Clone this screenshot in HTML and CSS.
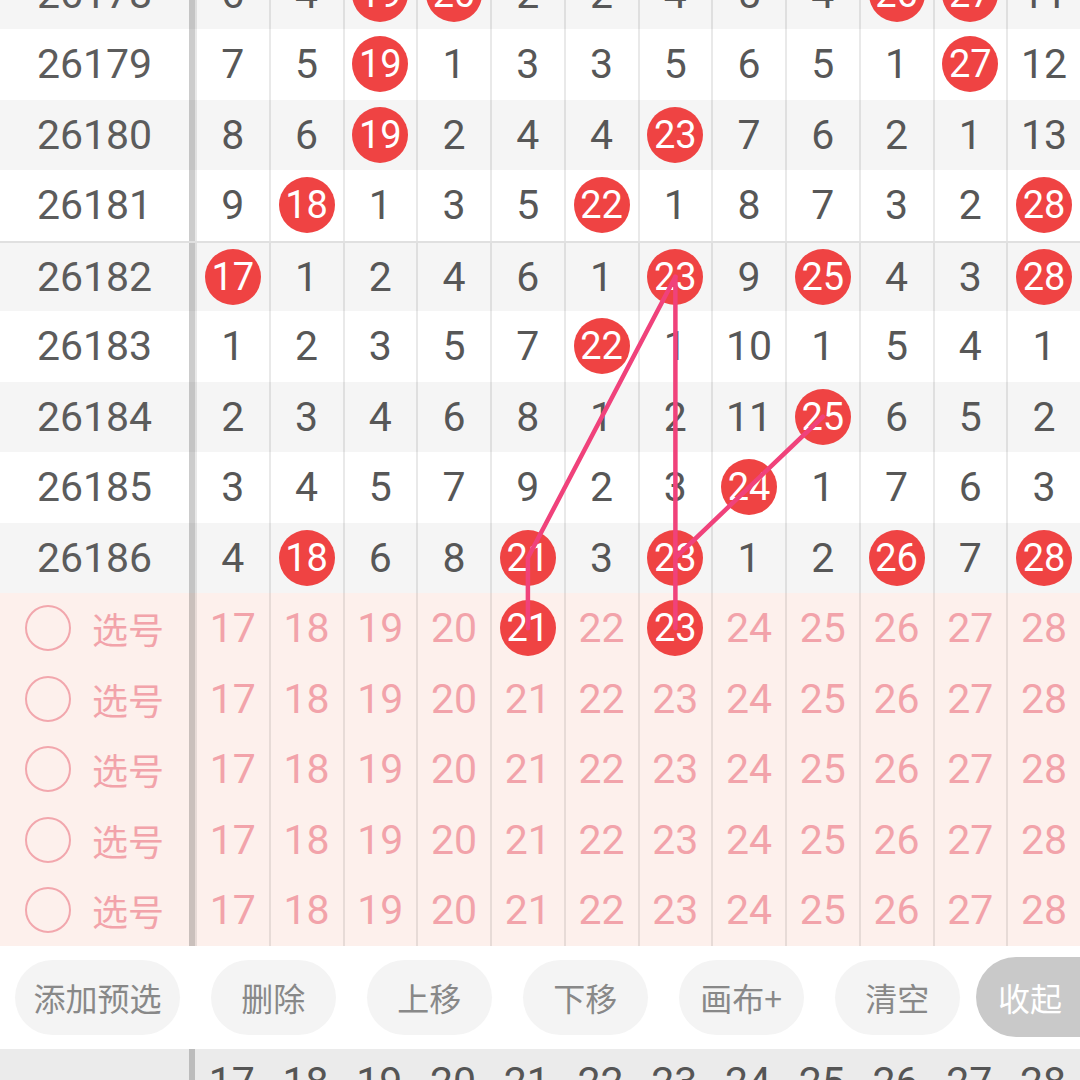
FILE: index.html
```html
<!DOCTYPE html>
<html lang="zh-CN">
<head>
<meta charset="utf-8">
<title>走势图</title>
<link rel="stylesheet" href="styles.css">
</head>
<body>
<div class="board">
  <div class="row alt">
    <div class="issue">26178</div>
    <div class="c">6</div><div class="c">4</div><div class="c"><span class="ball">19</span></div><div class="c"><span class="ball">20</span></div><div class="c">2</div><div class="c">2</div><div class="c">4</div><div class="c">5</div><div class="c">4</div><div class="c"><span class="ball">26</span></div><div class="c"><span class="ball">27</span></div><div class="c">11</div>
  </div>
  <div class="row">
    <div class="issue">26179</div>
    <div class="c">7</div><div class="c">5</div><div class="c"><span class="ball">19</span></div><div class="c">1</div><div class="c">3</div><div class="c">3</div><div class="c">5</div><div class="c">6</div><div class="c">5</div><div class="c">1</div><div class="c"><span class="ball">27</span></div><div class="c">12</div>
  </div>
  <div class="row alt">
    <div class="issue">26180</div>
    <div class="c">8</div><div class="c">6</div><div class="c"><span class="ball">19</span></div><div class="c">2</div><div class="c">4</div><div class="c">4</div><div class="c"><span class="ball">23</span></div><div class="c">7</div><div class="c">6</div><div class="c">2</div><div class="c">1</div><div class="c">13</div>
  </div>
  <div class="row">
    <div class="issue">26181</div>
    <div class="c">9</div><div class="c"><span class="ball">18</span></div><div class="c">1</div><div class="c">3</div><div class="c">5</div><div class="c"><span class="ball">22</span></div><div class="c">1</div><div class="c">8</div><div class="c">7</div><div class="c">3</div><div class="c">2</div><div class="c"><span class="ball">28</span></div>
  </div>
  <div class="row alt sep">
    <div class="issue">26182</div>
    <div class="c"><span class="ball">17</span></div><div class="c">1</div><div class="c">2</div><div class="c">4</div><div class="c">6</div><div class="c">1</div><div class="c"><span class="ball">23</span></div><div class="c">9</div><div class="c"><span class="ball">25</span></div><div class="c">4</div><div class="c">3</div><div class="c"><span class="ball">28</span></div>
  </div>
  <div class="row">
    <div class="issue">26183</div>
    <div class="c">1</div><div class="c">2</div><div class="c">3</div><div class="c">5</div><div class="c">7</div><div class="c"><span class="ball">22</span></div><div class="c">1</div><div class="c">10</div><div class="c">1</div><div class="c">5</div><div class="c">4</div><div class="c">1</div>
  </div>
  <div class="row alt">
    <div class="issue">26184</div>
    <div class="c">2</div><div class="c">3</div><div class="c">4</div><div class="c">6</div><div class="c">8</div><div class="c">1</div><div class="c">2</div><div class="c">11</div><div class="c"><span class="ball">25</span></div><div class="c">6</div><div class="c">5</div><div class="c">2</div>
  </div>
  <div class="row">
    <div class="issue">26185</div>
    <div class="c">3</div><div class="c">4</div><div class="c">5</div><div class="c">7</div><div class="c">9</div><div class="c">2</div><div class="c">3</div><div class="c"><span class="ball">24</span></div><div class="c">1</div><div class="c">7</div><div class="c">6</div><div class="c">3</div>
  </div>
  <div class="row alt">
    <div class="issue">26186</div>
    <div class="c">4</div><div class="c"><span class="ball">18</span></div><div class="c">6</div><div class="c">8</div><div class="c"><span class="ball">21</span></div><div class="c">3</div><div class="c"><span class="ball">23</span></div><div class="c">1</div><div class="c">2</div><div class="c"><span class="ball">26</span></div><div class="c">7</div><div class="c"><span class="ball">28</span></div>
  </div>

  <div class="row pick">
    <div class="issue"><span class="radio"></span><span class="pick-label">选号</span></div>
    <div class="c">17</div><div class="c">18</div><div class="c">19</div><div class="c">20</div><div class="c"><span class="ball">21</span></div><div class="c">22</div><div class="c"><span class="ball">23</span></div><div class="c">24</div><div class="c">25</div><div class="c">26</div><div class="c">27</div><div class="c">28</div>
  </div>
  <div class="row pick">
    <div class="issue"><span class="radio"></span><span class="pick-label">选号</span></div>
    <div class="c">17</div><div class="c">18</div><div class="c">19</div><div class="c">20</div><div class="c">21</div><div class="c">22</div><div class="c">23</div><div class="c">24</div><div class="c">25</div><div class="c">26</div><div class="c">27</div><div class="c">28</div>
  </div>
  <div class="row pick">
    <div class="issue"><span class="radio"></span><span class="pick-label">选号</span></div>
    <div class="c">17</div><div class="c">18</div><div class="c">19</div><div class="c">20</div><div class="c">21</div><div class="c">22</div><div class="c">23</div><div class="c">24</div><div class="c">25</div><div class="c">26</div><div class="c">27</div><div class="c">28</div>
  </div>
  <div class="row pick">
    <div class="issue"><span class="radio"></span><span class="pick-label">选号</span></div>
    <div class="c">17</div><div class="c">18</div><div class="c">19</div><div class="c">20</div><div class="c">21</div><div class="c">22</div><div class="c">23</div><div class="c">24</div><div class="c">25</div><div class="c">26</div><div class="c">27</div><div class="c">28</div>
  </div>
  <div class="row pick">
    <div class="issue"><span class="radio"></span><span class="pick-label">选号</span></div>
    <div class="c">17</div><div class="c">18</div><div class="c">19</div><div class="c">20</div><div class="c">21</div><div class="c">22</div><div class="c">23</div><div class="c">24</div><div class="c">25</div><div class="c">26</div><div class="c">27</div><div class="c">28</div>
  </div>
</div>

<div class="bar">
  <button class="pill wide">添加预选</button>
  <button class="pill">删除</button>
  <button class="pill">上移</button>
  <button class="pill">下移</button>
  <button class="pill">画布+</button>
  <button class="pill">清空</button>
  <button class="pill fold">收起</button>
</div>

<div class="row foot">
  <div class="issue"></div>
  <div class="h">17</div><div class="h">18</div><div class="h">19</div><div class="h">20</div><div class="h">21</div><div class="h">22</div><div class="h">23</div><div class="h">24</div><div class="h">25</div><div class="h">26</div><div class="h">27</div><div class="h">28</div>
</div>

<svg class="lines" viewBox="0 0 1080 1080" xmlns="http://www.w3.org/2000/svg">
  <g stroke="#f0427b" stroke-width="4.5" stroke-linecap="round" fill="none">
    <line x1="527.9" y1="628.25" x2="527.9" y2="557.75"/>
    <line x1="527.9" y1="557.75" x2="675.4" y2="276.75"/>
    <line x1="675.4" y1="276.75" x2="675.4" y2="628.25"/>
    <line x1="675.4" y1="557.75" x2="749.1" y2="487.25"/>
    <line x1="749.1" y1="487.25" x2="822.9" y2="416.75"/>
  </g>
</svg>
</body>
</html>
```

FILE: styles.css
```css
* {
  box-sizing: border-box;
  margin: 0;
  padding: 0;
}

html, body {
  width: 1080px;
  height: 1080px;
  overflow: hidden;
  background: #ffffff;
}

body {
  position: relative;
  font-family: Roboto, "Noto Sans CJK SC", sans-serif;
  color: #575757;
}

.board {
  margin-top: -41.5px;
}

.row {
  display: grid;
  grid-template-columns: 195px repeat(12, 1fr);
  height: 70.5px;
  background: #ffffff;
}

.row.alt {
  background: #f5f5f5;
}

.row.sep {
  border-top: 2px solid #e0e0e0;
}

.issue {
  display: flex;
  align-items: center;
  justify-content: center;
  border-right: 6px solid rgba(0, 0, 0, 0.2);
  font-size: 41px;
  color: #5c5c5c;
}

.c {
  display: flex;
  align-items: center;
  justify-content: center;
  border-left: 2px solid rgba(0, 0, 0, 0.085);
  font-size: 41px;
}

.ball {
  width: 56px;
  height: 56px;
  border-radius: 50%;
  background: #ef4343;
  color: #ffffff;
  font-size: 38px;
  display: flex;
  align-items: center;
  justify-content: center;
}

.row.pick {
  background: #fdf0ec;
  color: #f2a3aa;
}

.pick .issue {
  justify-content: flex-start;
  padding-left: 25px;
  gap: 21px;
  color: #f2a3aa;
}

.radio {
  width: 46px;
  height: 46px;
  border: 2px solid #f2a7ad;
  border-radius: 50%;
}

.pick-label {
  font-family: "Noto Sans CJK SC", sans-serif;
  font-size: 36px;
}

.bar {
  height: 103.5px;
  display: flex;
  align-items: center;
  padding-left: 15px;
  gap: 30.5px;
  background: #ffffff;
  overflow: hidden;
}

.pill {
  flex: none;
  width: 125.5px;
  height: 75px;
  border: none;
  border-radius: 38px;
  background: #f4f4f4;
  color: #888888;
  font-family: "Noto Sans CJK SC", sans-serif;
  font-size: 32px;
  display: flex;
  align-items: center;
  justify-content: center;
}

.pill.wide {
  width: 165px;
}

.pill.fold {
  width: 108px;
  height: 80px;
  border-radius: 40px 0 0 40px;
  margin-left: -14.5px;
  background: #c9c9c9;
  color: #ffffff;
}

.row.foot {
  background: #ebebeb;
  height: 66px;
}

.h {
  display: flex;
  align-items: center;
  justify-content: center;
  font-size: 41px;
  color: #555555;
}

.lines {
  position: absolute;
  left: 0;
  top: 0;
  width: 1080px;
  height: 1080px;
  pointer-events: none;
}
```
